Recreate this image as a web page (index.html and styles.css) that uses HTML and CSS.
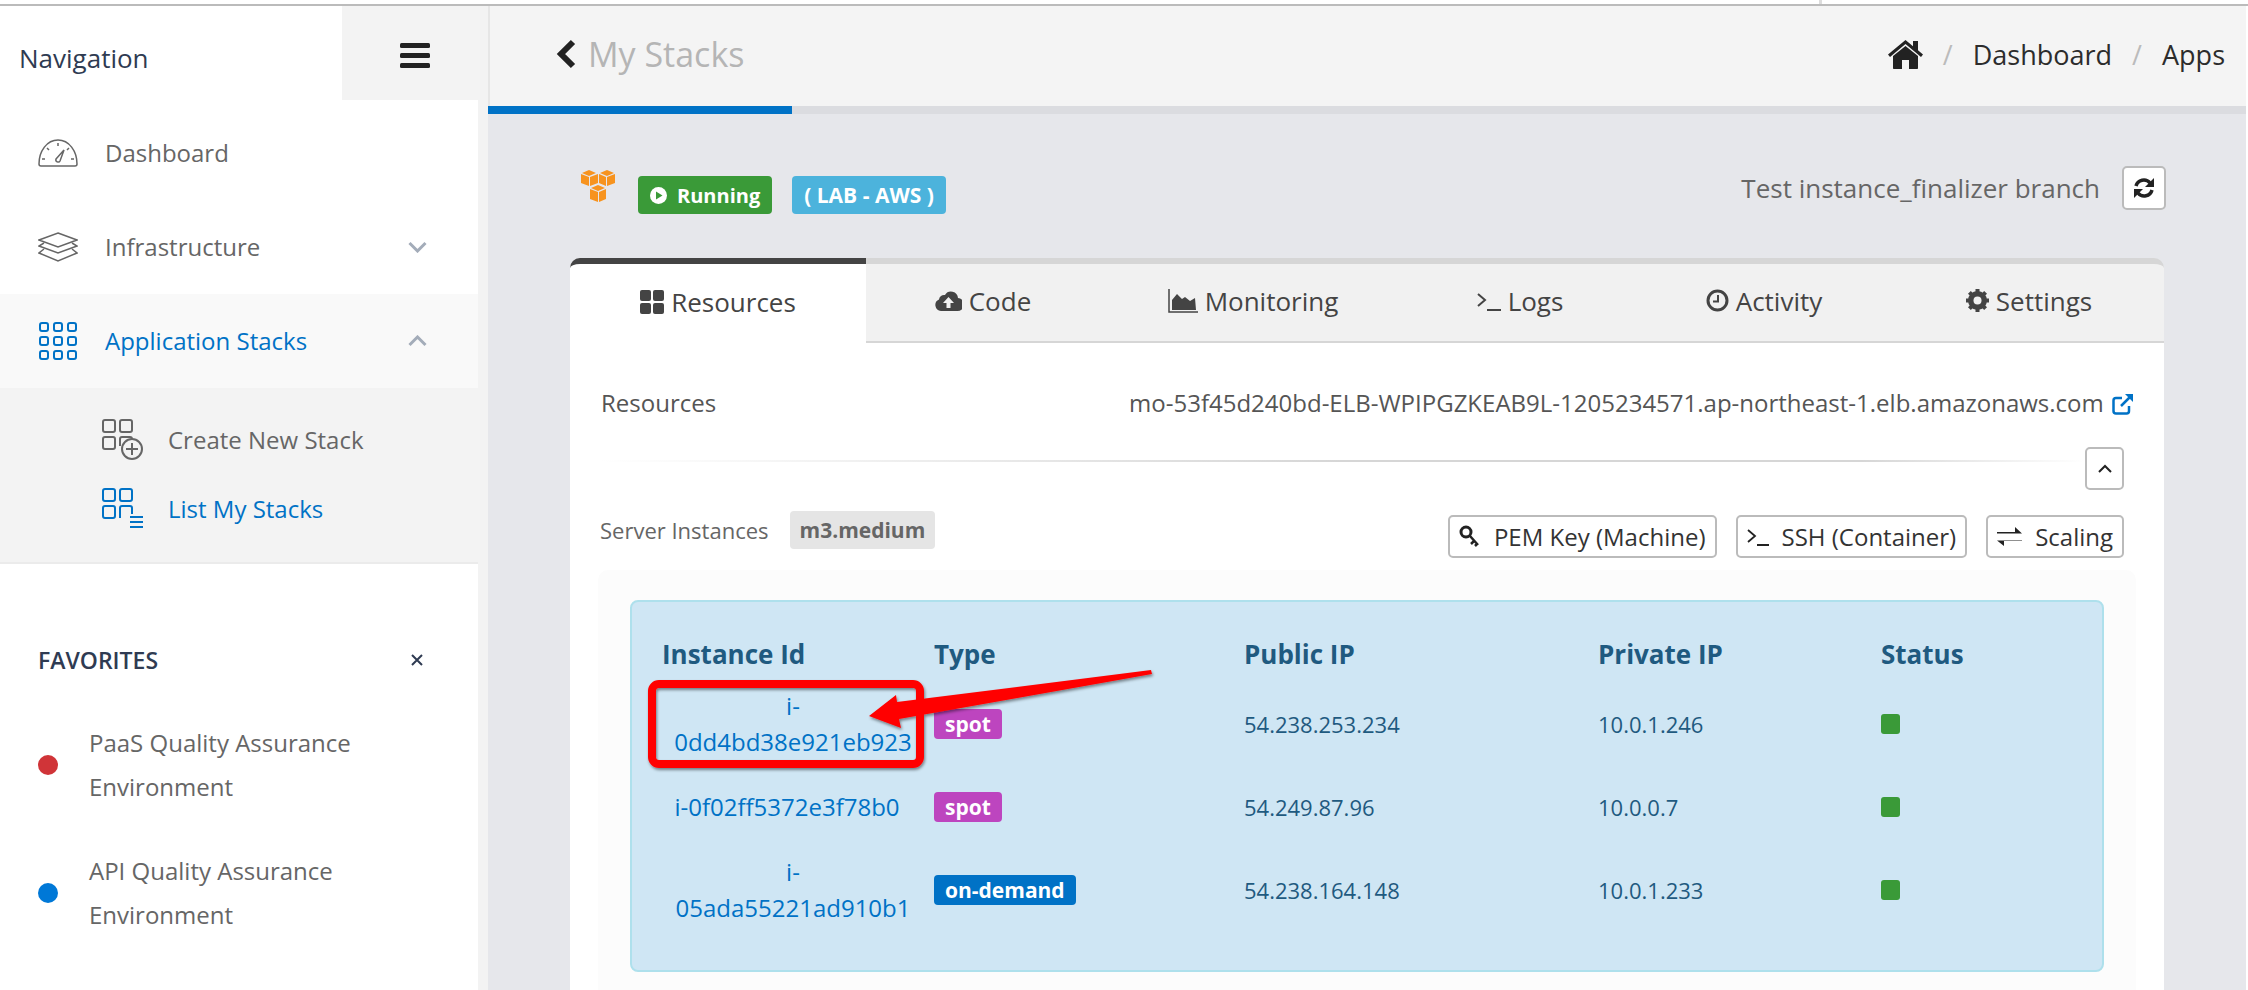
FILE: index.html
```html
<!DOCTYPE html>
<html lang="en">
<head>
    <meta charset="UTF-8">
    <meta name="viewport" content="width=device-width, initial-scale=1.0">
    <title>My Stacks</title>
    <link rel="stylesheet" href="styles.css">
</head>
<body>
    <div class="topline"></div>
    <div class="app">
        <!-- Sidebar -->
        <aside class="sidebar">
            <div class="side-head">
                <div class="side-title">Navigation</div>
                <div class="side-toggle">
                    <svg width="30" height="25" viewBox="0 0 30 25"><g fill="#222"><rect y="0" width="30" height="5" rx="1.5"/><rect y="10" width="30" height="5" rx="1.5"/><rect y="20" width="30" height="5" rx="1.5"/></g></svg>
                </div>
            </div>
            <nav class="side-nav">
                <a class="nav-item" href="#">
                    <svg class="nav-icon" width="40" height="28" viewBox="0 0 40 28" fill="none" stroke="#666" stroke-width="1.5"><path d="M1 25c0-13 8-24 19-24s19 11 19 24c0 1-1 2-2 2H3c-1 0-2-1-2-2z"/><path d="M20 4v3M9 9l2 2M31 9l-2 2M4 20h3M33 20h3"/><path d="M18 20l8-9-4 11c-1 2-5 1-4-2z"/></svg>
                    <span>Dashboard</span>
                </a>
                <a class="nav-item" href="#">
                    <svg class="nav-icon" width="40" height="30" viewBox="0 0 40 30" fill="none" stroke="#666" stroke-width="1.5"><path d="M20 1l19 7-19 7L1 8z"/><path d="M6 11l-5 3 19 7 19-7-5-3"/><path d="M6 17l-5 4 19 8 19-8-5-4"/></svg>
                    <span>Infrastructure</span>
                    <svg class="nav-caret" width="19" height="12" viewBox="0 0 19 12" fill="none" stroke="#a3acb9" stroke-width="3"><path d="M1.5 2l8 8 8-8"/></svg>
                </a>
                <a class="nav-item nav-open" href="#">
                    <svg class="nav-icon" width="38" height="38" viewBox="0 0 38 38" fill="none" stroke="#0072c6" stroke-width="2"><rect x="1" y="1" width="8" height="8" rx="2"/><rect x="15" y="1" width="8" height="8" rx="2"/><rect x="29" y="1" width="8" height="8" rx="2"/><rect x="1" y="15" width="8" height="8" rx="2"/><rect x="15" y="15" width="8" height="8" rx="2"/><rect x="29" y="15" width="8" height="8" rx="2"/><rect x="1" y="29" width="8" height="8" rx="2"/><rect x="15" y="29" width="8" height="8" rx="2"/><rect x="29" y="29" width="8" height="8" rx="2"/></svg>
                    <span>Application Stacks</span>
                    <svg class="nav-caret" width="19" height="12" viewBox="0 0 19 12" fill="none" stroke="#a3acb9" stroke-width="3"><path d="M1.5 10l8-8 8 8"/></svg>
                </a>
                <div class="sub-nav">
                    <a class="sub-item" href="#">
                        <svg width="41" height="41" viewBox="0 0 41 41" fill="none" stroke="#666" stroke-width="2"><rect x="1" y="1" width="12" height="12" rx="2"/><rect x="18" y="1" width="12" height="12" rx="2"/><rect x="1" y="18" width="12" height="12" rx="2"/><path d="M18 27v-7c0-1 1-2 2-2h8c1 0 2 1 2 2"/><circle cx="30" cy="30" r="10" fill="#f3f3f3"/><path d="M30 24v12M24 30h12"/></svg>
                        <span>Create New Stack</span>
                    </a>
                    <a class="sub-item sub-active" href="#">
                        <svg width="41" height="41" viewBox="0 0 41 41" fill="none" stroke="#0072c6" stroke-width="2"><rect x="1" y="1" width="12" height="12" rx="2"/><rect x="18" y="1" width="12" height="12" rx="2"/><rect x="1" y="18" width="12" height="12" rx="2"/><path d="M18 30V20c0-1 1-2 2-2h8c1 0 2 1 2 2v6"/><path d="M28 29h13M28 34h13M28 39h13"/></svg>
                        <span>List My Stacks</span>
                    </a>
                </div>
            </nav>
            <div class="favorites">
                <div class="fav-head">
                    <span>FAVORITES</span>
                    <svg width="12" height="12" viewBox="0 0 12 12" fill="none" stroke="#2f3b52" stroke-width="2"><path d="M1 1l10 10M11 1L1 11"/></svg>
                </div>
                <a class="fav-item" href="#"><i class="dot dot-red"></i><span>PaaS Quality Assurance Environment</span></a>
                <a class="fav-item" href="#"><i class="dot dot-blue"></i><span>API Quality Assurance Environment</span></a>
            </div>
        </aside>

        <!-- Main -->
        <main class="main">
            <header class="page-head">
                <div class="page-title">
                    <svg width="20" height="30" viewBox="0 0 20 30" fill="none" stroke="#222" stroke-width="6"><path d="M17 3L5 15l12 12"/></svg>
                    <span>My Stacks</span>
                </div>
                <div class="crumbs">
                    <svg width="35" height="29" viewBox="0 0 35 29" fill="#222"><path d="M17.500 6L5 16v12c0 .6.400 1 1 1h8v-9h7v9h8c.6 0 1-.4 1-1V16z"/><path d="M17.500 0L0 14.500l2 2.500L17.500 4 33 17l2-2.500-5-4.200V1h-5v5.200z"/></svg>
                    <span class="sep">/</span>
                    <span>Dashboard</span>
                    <span class="sep">/</span>
                    <span>Apps</span>
                </div>
            </header>
            <div class="progress"><div class="progress-fill"></div></div>

            <section class="content">
                <div class="stack-head">
                    <div class="stack-status">
                        <svg class="aws-icon" width="34" height="32" viewBox="0 0 34 32" fill="#f7931e"><path d="M0 4l8 3v9l-8-3zM17 4l-8 3v9l8-3zM1 3l7-3 7 3-7 3zM18 4l7 3v9l-7-3zM34 4l-8 3v9l8-3zM19 3l7-3 7 3-7 3zM9 19l8 3v10l-8-3zM25 19l-7 3v10l7-3zM10 18l7-3 7 3-7 3z"/></svg>
                        <span class="label label-green">
                            <svg width="17" height="17" viewBox="0 0 17 17"><circle cx="8.500" cy="8.500" r="8.500" fill="#fff"/><path d="M6 4.500l6.500 4-6.500 4z" fill="#3a9a38"/></svg>
                            Running
                        </span>
                        <span class="label label-cyan">( LAB - AWS )</span>
                    </div>
                    <div class="stack-note">
                        <span>Test instance_finalizer branch</span>
                        <button class="btn btn-icon">
                            <svg width="22" height="22" viewBox="0 0 22 22" fill="none" stroke="#222" stroke-width="3.500"><path d="M3 9a8 8 0 0 1 14-3l2 2"/><path d="M19 13a8 8 0 0 1-14 3l-2-2"/><path d="M21 1v9h-9z" fill="#222" stroke="none"/><path d="M1 21v-9h9z" fill="#222" stroke="none"/></svg>
                        </button>
                    </div>
                </div>

                <div class="tabs">
                    <a class="tab tab-active" href="#">
                        <svg width="24" height="24" viewBox="0 0 24 24" fill="#444"><rect width="11" height="11" rx="2"/><rect x="13" width="11" height="11" rx="2"/><rect y="13" width="11" height="11" rx="2"/><rect x="13" y="13" width="11" height="11" rx="2"/></svg>
                        Resources
                    </a>
                    <a class="tab" href="#">
                        <svg width="27" height="22" viewBox="0 0 27 22"><path d="M6 21a6 6 0 0 1-2-11.500A5 5 0 0 1 10 5a7 7 0 0 1 13 3 6.500 6.500 0 0 1-1 13z" fill="#444"/><path d="M13.500 7l5.500 6h-3.500v5h-4v-5H8z" fill="#f1f1f1"/></svg>
                        Code
                    </a>
                    <a class="tab" href="#">
                        <svg width="30" height="24" viewBox="0 0 30 24" fill="#444"><path d="M1 0v23h29" fill="none" stroke="#444" stroke-width="1.500"/><path d="M4 21V11l5-6 5 5 3-2 5 4 5-3 1 12z"/></svg>
                        Monitoring
                    </a>
                    <a class="tab" href="#">
                        <svg width="24" height="20" viewBox="0 0 24 20" fill="none" stroke="#444" stroke-width="2"><path d="M1 3l7 6-7 6M10 19h14"/></svg>
                        Logs
                    </a>
                    <a class="tab" href="#">
                        <svg width="23" height="23" viewBox="0 0 23 23" fill="none" stroke="#444" stroke-width="3"><circle cx="11.500" cy="11.500" r="9.500"/><path d="M12 6v6.500H7" stroke-width="2"/></svg>
                        Activity
                    </a>
                    <a class="tab" href="#">
                        <svg width="23" height="23" viewBox="0 0 23 23"><circle cx="11.500" cy="11.500" r="7" fill="none" stroke="#444" stroke-width="5"/><path d="M11.500 0v23M0 11.500h23M3.400 3.400l16.200 16.200M19.600 3.400L3.400 19.600" stroke="#444" stroke-width="4"/><circle cx="11.500" cy="11.500" r="4" fill="#f1f1f1"/></svg>
                        Settings
                    </a>
                </div>

                <div class="panel">
                    <div class="res-row">
                        <span>Resources</span>
                        <span class="res-host">
                            mo-53f45d240bd-ELB-WPIPGZKEAB9L-1205234571.ap-northeast-1.elb.amazonaws.com
                            <svg width="22" height="22" viewBox="0 0 22 22" fill="none" stroke="#0072c6" stroke-width="2.500"><path d="M17 13v5c0 1.500-1 2.500-2.500 2.500H4C2.500 20.500 1.500 19.500 1.500 18V7.500C1.500 6 2.500 5 4 5h6"/><path d="M9 13L20 2"/><path d="M13 1h8v8z" fill="#0072c6" stroke="none"/></svg>
                        </span>
                    </div>
                    <div class="divider-row">
                        <div class="divider"></div>
                        <button class="btn btn-collapse">
                            <svg width="14" height="9" viewBox="0 0 14 9" fill="none" stroke="#222" stroke-width="2"><path d="M1 8l6-6 6 6"/></svg>
                        </button>
                    </div>
                    <div class="inst-head">
                        <div class="inst-title">
                            <span>Server Instances</span>
                            <span class="label label-gray">m3.medium</span>
                        </div>
                        <div class="inst-actions">
                            <button class="btn">
                                <svg width="22" height="24" viewBox="0 0 22 24" fill="none" stroke="#222" stroke-width="3"><circle cx="7" cy="7" r="5"/><path d="M11 11l8 9M15 16l-3 3M18 19l-2 2" stroke-width="2.500"/></svg>
                                PEM Key (Machine)
                            </button>
                            <button class="btn">
                                <svg width="22" height="18" viewBox="0 0 22 18" fill="none" stroke="#222" stroke-width="1.800"><path d="M1 2l7 6-7 6M10 17h12"/></svg>
                                SSH (Container)
                            </button>
                            <button class="btn">
                                <svg width="25" height="20" viewBox="0 0 25 20" fill="#222"><path d="M0 5h18V0l7 6.500H0zM25 14H7v5L0 13.500h25z"/></svg>
                                Scaling
                            </button>
                        </div>
                    </div>

                    <div class="well">
                        <div class="info-box">
                            <table class="inst-table">
                                <thead>
                                    <tr>
                                        <th class="col-id">Instance Id</th>
                                        <th class="col-type">Type</th>
                                        <th class="col-pub">Public IP</th>
                                        <th class="col-priv">Private IP</th>
                                        <th>Status</th>
                                    </tr>
                                </thead>
                                <tbody>
                                    <tr>
                                        <td class="inst-id"><a href="#">i-<br>0dd4bd38e921eb923</a></td>
                                        <td><span class="tag tag-spot">spot</span></td>
                                        <td>54.238.253.234</td>
                                        <td>10.0.1.246</td>
                                        <td><i class="state"></i></td>
                                    </tr>
                                    <tr>
                                        <td class="inst-id inst-id-short"><a href="#">i-0f02ff5372e3f78b0</a></td>
                                        <td><span class="tag tag-spot">spot</span></td>
                                        <td>54.249.87.96</td>
                                        <td>10.0.0.7</td>
                                        <td><i class="state"></i></td>
                                    </tr>
                                    <tr>
                                        <td class="inst-id"><a href="#">i-<br>05ada55221ad910b1</a></td>
                                        <td><span class="tag tag-demand">on-demand</span></td>
                                        <td>54.238.164.148</td>
                                        <td>10.0.1.233</td>
                                        <td><i class="state"></i></td>
                                    </tr>
                                </tbody>
                            </table>
                        </div>
                    </div>
                </div>
            </section>
        </main>
    </div>

    <!-- Red annotation drawn over the screenshot -->
    <svg class="annotation" width="2248" height="990" viewBox="0 0 2248 990">
        <defs>
            <filter id="markShadow" x="-5%" y="-20%" width="110%" height="140%">
                <feDropShadow dx="1" dy="2" stdDeviation="1.500" flood-color="#000" flood-opacity="0.45"/>
            </filter>
        </defs>
        <g filter="url(#markShadow)">
            <rect x="652" y="684" width="268" height="80" rx="7" fill="none" stroke="#f00" stroke-width="8"/>
            <path d="M869 716L896 695 897 702 1151 670 1152 674 899 719 901 728z" fill="#f00"/>
        </g>
    </svg>
</body>
</html>
```
FILE: styles.css
```css
* {
    margin: 0;
    padding: 0;
    box-sizing: border-box;
}

html, body {
    width: 2248px;
    height: 990px;
    overflow: hidden;
}

body {
    position: relative;
    font-family: "Open Sans", sans-serif;
    background: #fff;
    color: #666;
}

a {
    color: inherit;
    text-decoration: none;
}

.topline {
    height: 6px;
    border-bottom: 2px solid #bbb;
    background: linear-gradient(#ddd, #ddd) 1819px 0 / 3px 4px no-repeat;
}

.app {
    display: flex;
    height: 984px;
    padding-right: 2px;
}

/* Sidebar */
.sidebar {
    width: 488px;
    flex: none;
    background: #fff;
    border-right: 10px solid #f3f3f3;
}

.side-head {
    display: flex;
    height: 94px;
    margin-right: -10px;
}

.side-title {
    flex: 1;
    padding: 34px 0 0 19px;
    font-size: 26px;
    line-height: 36px;
    color: #2f3b52;
}

.side-toggle {
    width: 146px;
    background: #f3f3f3;
    padding: 37px 0 0 58px;
}

.side-nav {
    padding-top: 6px;
}

.nav-item {
    display: flex;
    align-items: center;
    height: 94px;
    padding: 0 51px 0 38px;
    font-size: 24px;
    color: #666;
}

.nav-item span {
    flex: 1;
    margin: 0 0 2px 27px;
}

.nav-icon {
    flex: none;
    width: 40px;
}

.nav-open {
    background: #f9f9f9;
    color: #0072c6;
}

.sub-nav {
    height: 176px;
    padding-top: 17px;
    background: #f3f3f3;
    border-bottom: 2px solid #ebebeb;
}

.sub-item {
    display: flex;
    align-items: center;
    gap: 25px;
    height: 69px;
    padding-left: 102px;
    font-size: 24px;
    color: #666;
}

.sub-active {
    color: #0072c6;
}

.favorites {
    padding: 80px 51px 0 38px;
}

.fav-head {
    display: flex;
    justify-content: space-between;
    align-items: center;
    height: 32px;
    margin-bottom: 45px;
    font-size: 23px;
    font-weight: 600;
    color: #2f3b52;
}

.fav-head svg {
    margin-right: 4px;
}

.fav-item {
    display: flex;
    align-items: center;
    gap: 31px;
    margin-bottom: 40px;
    font-size: 24px;
    line-height: 44px;
    color: #666;
}

.fav-item span {
    width: 300px;
}

.dot {
    flex: none;
    width: 20px;
    height: 20px;
    border-radius: 50%;
}

.dot-red {
    background: #d03438;
}

.dot-blue {
    background: #0078d7;
}

/* Main */
.main {
    flex: 1;
    min-width: 0;
    background: #e6e7eb;
}

.page-head {
    display: flex;
    justify-content: space-between;
    align-items: center;
    height: 100px;
    background: #f4f4f4;
    border-left: 2px solid #e6e6e6;
    padding: 0 21px 4px 66px;
}

.page-title {
    display: flex;
    align-items: center;
    gap: 12px;
    font-size: 34px;
    color: #b5b5b5;
}

.crumbs {
    display: flex;
    align-items: center;
    font-size: 27px;
    color: #2c2c2c;
}

.crumbs svg {
    margin-right: 20px;
}

.crumbs .sep {
    margin-right: 20px;
    color: #bbb;
}

.crumbs span + .sep {
    margin-left: 20px;
}

.progress {
    height: 8px;
    background: #dbdce0;
}

.progress-fill {
    width: 304px;
    height: 100%;
    background: #0072c6;
}

.content {
    padding: 0 82px 0 82px;
}

.stack-head {
    display: flex;
    justify-content: space-between;
    height: 144px;
}

.stack-status {
    display: flex;
    align-items: flex-start;
    padding-top: 62px;
}

.aws-icon {
    margin: -6px 23px 0 11px;
}

.label {
    display: inline-flex;
    align-items: center;
    gap: 10px;
    height: 38px;
    padding: 0 12px;
    border-radius: 4px;
    font-size: 20px;
    font-weight: 700;
    color: #fff;
}

.label-green {
    background: #3a9a38;
}

.label-cyan {
    margin-left: 20px;
    padding: 0 12px;
    background: #4cb3dc;
    font-size: 21px;
}

.label-gray {
    margin-left: 21px;
    padding: 0 10px;
    background: #e5e5e5;
    color: #666;
}

.stack-note {
    display: flex;
    align-items: flex-start;
    gap: 22px;
    padding-top: 52px;
    font-size: 26px;
    line-height: 44px;
}

.btn {
    display: inline-flex;
    align-items: center;
    gap: 13px;
    height: 43px;
    padding: 0 9px;
    background: #fff;
    border: 2px solid #bbb;
    border-radius: 5px;
    font-family: inherit;
    font-size: 24px;
    color: #333;
}

.btn-icon {
    justify-content: center;
    width: 44px;
    height: 44px;
    padding: 0;
    margin-right: -2px;
}

.btn-collapse {
    justify-content: center;
    flex: none;
    width: 39px;
    padding: 0;
}

/* Tabs */
.tabs {
    display: grid;
    grid-template-columns: 296px 234px 306px 228px 260px 270px;
    height: 85px;
    background: #f1f1f1;
    border-top: 6px solid #d6d6d6;
    border-bottom: 2px solid #d6d6d6;
    border-radius: 10px 10px 0 0;
}

.tab {
    display: flex;
    align-items: center;
    justify-content: center;
    gap: 7px;
    padding-bottom: 4px;
    font-size: 26px;
    color: #444;
}

.tab-active {
    margin: -6px 0 -2px;
    background: #fff;
    border-top: 6px solid #444;
    border-radius: 10px 0 0 0;
}

/* Panel */
.panel {
    height: 647px;
    padding: 0 40px 0 28px;
    background: #fff;
}

.res-row {
    display: flex;
    justify-content: space-between;
    align-items: center;
    height: 120px;
    margin-right: -10px;
    padding: 0 0 2px 3px;
    font-size: 24px;
    color: #555;
}

.res-host svg {
    margin-left: 2px;
    vertical-align: -3px;
}

.divider-row {
    display: flex;
    align-items: center;
    height: 43px;
    margin-top: -16px;
}

.divider {
    flex: 1;
    height: 2px;
    margin: -16px 0 0 0;
    background: linear-gradient(to right, #fff, #d6d6d6 50%, #d6d6d6 85%, #fff);
}

.inst-head {
    display: flex;
    justify-content: space-between;
    align-items: flex-start;
    height: 80px;
    margin-top: 25px;
    padding-left: 2px;
}

.inst-title {
    display: flex;
    align-items: center;
    margin-top: -4px;
    font-size: 22px;
    color: #666;
}

.inst-title .label {
    font-size: 21px;
}

.inst-actions {
    display: flex;
    gap: 19px;
}

.well {
    height: 420px;
    margin: -25px -12px 0 0;
    padding: 30px 32px 0 32px;
    background: #fcfcfc;
    border-radius: 10px 10px 0 0;
}

.info-box {
    height: 372px;
    padding: 0 0 0 30px;
    background: #cfe6f4;
    border: 2px solid #aee0ec;
    border-radius: 8px;
}

/* Table */
.inst-table {
    width: 100%;
    border-collapse: collapse;
    table-layout: fixed;
    margin-top: 32px;
    font-size: 22px;
    color: #1f5a80;
    text-align: left;
}

.inst-table th {
    height: 40px;
    font-size: 26px;
    font-weight: 700;
}

.inst-table td {
    padding: 14px 0 15px;
    line-height: 36px;
    vertical-align: middle;
}

.col-id {
    width: 272px;
}

.col-type {
    width: 310px;
}

.col-pub {
    width: 354px;
}

.col-priv {
    width: 283px;
}

.inst-table .inst-id {
    padding-right: 10px;
    text-align: center;
    font-size: 24px;
    color: #0072c6;
}

.inst-table .inst-id-short {
    padding-right: 22px;
}

.tag {
    display: block;
    width: fit-content;
    height: 30px;
    padding: 0 11px;
    border-radius: 4px;
    font-size: 21px;
    font-weight: 700;
    line-height: 30px;
    color: #fff;
}

.tag-spot {
    background: #bd45bf;
}

.tag-demand {
    background: #0072c6;
}

.state {
    display: block;
    width: 19px;
    height: 20px;
    border-radius: 3px;
    background: #3a9a38;
}

/* Annotation */
.annotation {
    position: absolute;
    top: 0;
    left: 0;
    pointer-events: none;
}
```
